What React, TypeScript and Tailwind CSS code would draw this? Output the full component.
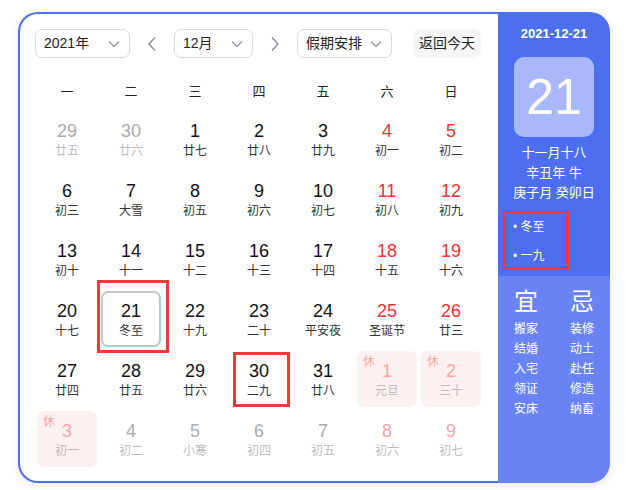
import React from "react";

type Cell = {
  d: number;
  l: string;
  other?: boolean;
  red?: boolean;
  rest?: boolean;
  sel?: boolean;
};

const rows: Cell[][] = [
  [
    { d: 29, l: "廿五", other: true },
    { d: 30, l: "廿六", other: true },
    { d: 1, l: "廿七" },
    { d: 2, l: "廿八" },
    { d: 3, l: "廿九" },
    { d: 4, l: "初一", red: true },
    { d: 5, l: "初二", red: true },
  ],
  [
    { d: 6, l: "初三" },
    { d: 7, l: "大雪" },
    { d: 8, l: "初五" },
    { d: 9, l: "初六" },
    { d: 10, l: "初七" },
    { d: 11, l: "初八", red: true },
    { d: 12, l: "初九", red: true },
  ],
  [
    { d: 13, l: "初十" },
    { d: 14, l: "十一" },
    { d: 15, l: "十二" },
    { d: 16, l: "十三" },
    { d: 17, l: "十四" },
    { d: 18, l: "十五", red: true },
    { d: 19, l: "十六", red: true },
  ],
  [
    { d: 20, l: "十七" },
    { d: 21, l: "冬至", sel: true },
    { d: 22, l: "十九" },
    { d: 23, l: "二十" },
    { d: 24, l: "平安夜" },
    { d: 25, l: "圣诞节", red: true },
    { d: 26, l: "廿三", red: true },
  ],
  [
    { d: 27, l: "廿四" },
    { d: 28, l: "廿五" },
    { d: 29, l: "廿六" },
    { d: 30, l: "二九" },
    { d: 31, l: "廿八" },
    { d: 1, l: "元旦", other: true, rest: true },
    { d: 2, l: "三十", other: true, rest: true },
  ],
  [
    { d: 3, l: "初一", other: true, rest: true },
    { d: 4, l: "初二", other: true },
    { d: 5, l: "小寒", other: true },
    { d: 6, l: "初四", other: true },
    { d: 7, l: "初五", other: true },
    { d: 8, l: "初六", other: true, red: true },
    { d: 9, l: "初七", other: true, red: true },
  ],
];

const Chevron = () => (
  <svg width="12" height="8" viewBox="0 0 12 8" fill="none">
    <path d="M1 1.5L6 6.5L11 1.5" stroke="#9a9aa6" strokeWidth="1.3" />
  </svg>
);

const Select = ({ w, label }: { w: string; label: string }) => (
  <div
    className={`${w} h-[29px] flex items-center justify-between pl-[8px] pr-[9px] border border-[#d7d8de] rounded-[7px] text-[14px] text-[#222]`}
  >
    <span>{label}</span>
    <Chevron />
  </div>
);

const Arrow = ({ dir }: { dir: "l" | "r" }) => (
  <div className="w-[44px] h-[29px] flex items-center justify-center">
    <svg width="10" height="16" viewBox="0 0 10 16" fill="none">
      {dir === "l" ? (
        <path d="M8 1.5L2 8L8 14.5" stroke="#8b8b96" strokeWidth="1.4" />
      ) : (
        <path d="M2 1.5L8 8L2 14.5" stroke="#8b8b96" strokeWidth="1.4" />
      )}
    </svg>
  </div>
);

function DayCell({ c }: { c: Cell }) {
  let numColor = "text-[#111]";
  let lunarColor = "text-[#333]";
  if (c.other) {
    numColor = c.red || c.rest ? "text-[#f8a4a4]" : "text-[#aaaaaa]";
    lunarColor = "text-[#bcbcbc]";
  } else if (c.red) {
    numColor = "text-[#f73131]";
  }
  const bg = c.rest ? "bg-[#fdf0f0]" : "";
  const border = c.sel ? "border-2 border-[#c2c4cc]" : "border-2 border-transparent";
  return (
    <div className="h-[60px] px-[2px] py-[2px]">
      <div
        className={`relative h-[56px] rounded-[7px] ${bg} ${border} flex flex-col items-center pt-[8px]`}
      >
        {c.rest && (
          <span className="absolute left-[4px] top-[2px] text-[12px] leading-[14px] text-[#f8a4a4]">
            休
          </span>
        )}
        <span className={`text-[18px] leading-[20px] ${numColor}`}>{c.d}</span>
        <span className={`mt-[2px] text-[12px] leading-[16px] ${lunarColor}`}>{c.l}</span>
      </div>
    </div>
  );
}

export default function App() {
  return (
    <div className="w-[631px] h-[490px] bg-white font-['Liberation_Sans','Noto_Sans_CJK_SC',sans-serif] pt-[12px] pl-[18px]">
      <div className="relative w-[592px] h-[471px] flex rounded-[20px] shadow-[0_2px_8px_rgba(0,0,0,0.10)]">
        {/* left */}
        <div className="w-[480px] h-full border-l-2 border-t-2 border-b-2 border-[#4e6ef2] rounded-l-[20px] bg-white pl-[15px] pt-[15px]">
          <div className="flex items-center">
            <Select w="w-[95px]" label="2021年" />
            <Arrow dir="l" />
            <Select w="w-[79px]" label="12月" />
            <Arrow dir="r" />
            <Select w="w-[95px]" label="假期安排" />
            <div className="ml-[21px] w-[68px] h-[29px] flex items-center justify-center rounded-[7px] bg-[#f5f5f6] text-[14px] text-[#222]">
              返回今天
            </div>
          </div>
          <div className="mt-[22px] grid grid-cols-[repeat(7,64px)] h-[24px] items-center text-[13px] text-[#222]">
            {["一", "二", "三", "四", "五", "六", "日"].map((w) => (
              <div key={w} className="text-center">
                {w}
              </div>
            ))}
          </div>
          <div className="mt-[5px] grid grid-cols-[repeat(7,64px)]">
            {rows.flat().map((c, i) => (
              <DayCell key={i} c={c} />
            ))}
          </div>
        </div>
        {/* right */}
        <div className="w-[112px] h-full rounded-r-[20px] overflow-hidden flex flex-col text-white">
          <div className="h-[264px] shrink-0 bg-[#4e6ef2] flex flex-col items-center pt-[13px]">
            <div className="text-[13px] leading-[18px] font-semibold">2021-12-21</div>
            <div className="mt-[14px] w-[80px] h-[80px] rounded-[10px] bg-[#a9b8fa] flex items-center justify-center text-[50px] leading-[50px]">
              21
            </div>
            <div className="mt-[6px] flex flex-col items-center text-[13px] leading-[20px]">
              <span>十一月十八</span>
              <span>辛丑年 牛</span>
              <span>庚子月 癸卯日</span>
            </div>
            <div className="self-start pl-[15px] mt-[16px] flex flex-col text-[12px] leading-[16px] gap-[13px]">
              <span>• 冬至</span>
              <span>• 一九</span>
            </div>
          </div>
          <div className="flex-1 bg-[#6a83f4] grid grid-cols-2 pt-[12px] content-start">
            <div className="flex flex-col items-center">
              <span className="text-[24px] leading-[28px]">宜</span>
              <div className="mt-[3px] flex flex-col text-[12px] leading-[20px]">
                <span>搬家</span>
                <span>结婚</span>
                <span>入宅</span>
                <span>领证</span>
                <span>安床</span>
              </div>
            </div>
            <div className="flex flex-col items-center">
              <span className="text-[24px] leading-[28px]">忌</span>
              <div className="mt-[3px] flex flex-col text-[12px] leading-[20px]">
                <span>装修</span>
                <span>动土</span>
                <span>赴任</span>
                <span>修造</span>
                <span>纳畜</span>
              </div>
            </div>
          </div>
        </div>
        {/* red highlight annotations */}
        <div className="absolute left-[79px] top-[268px] w-[72px] h-[73px] border-[3px] border-[#f03a3a]" />
        <div className="absolute left-[215px] top-[340px] w-[57px] h-[55px] border-[3px] border-[#f03a3a]" />
        <div className="absolute left-[485px] top-[199px] w-[66px] h-[59px] border-[3px] border-[#f03a3a]" />
      </div>
    </div>
  );
}
